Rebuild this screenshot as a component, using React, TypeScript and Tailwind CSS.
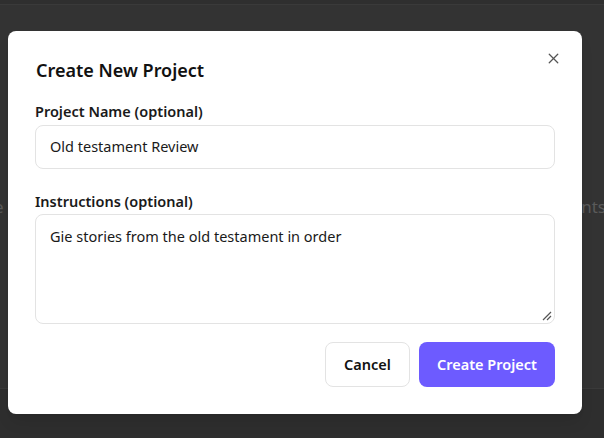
import { X } from "lucide-react";

export default function App() {
  return (
    <div
      className="relative h-[438px] w-[604px] overflow-hidden bg-[#333333]"
      style={{ fontFamily: '"Noto Sans", "Open Sans", sans-serif' }}
    >
      {/* dimmed page behind the overlay */}
      <div className="h-[5px] border-b border-[#3a3a3a] bg-[#2f2f2f]" />
      <div className="flex h-[383px] items-center justify-between pt-[20px] text-[17px] text-[#5a5a5a]">
        <span className="-ml-[6px]">e</span>
        <span className="-mr-[2px]">nts</span>
      </div>
      <div className="h-[50px] border-t border-[#3a3a3a] bg-[#2e2e2e]" />

      <div className="absolute left-[8px] top-[31px] w-[574px] rounded-lg bg-white px-[27px] pb-[27px] pt-[26px] shadow-lg">
        <button className="absolute right-[20px] top-[19px] text-[#555]">
          <X className="h-[17px] w-[17px]" strokeWidth={1.8} />
        </button>
        <h2 className="ml-px text-[18px] font-semibold leading-[26px] text-[#111]">Create New Project</h2>

        <label className="mt-[18px] block text-[14.5px] font-semibold leading-[20px] text-[#1a1a1a]">
          Project Name (optional)
        </label>
        <div className="mt-[4px] flex h-[44px] items-center rounded-lg border border-[#e3e3e3] px-[14px] text-[14.5px] text-[#1a1a1a]">
          Old testament Review
        </div>

        <label className="mt-[22px] block text-[14.5px] font-semibold leading-[20px] text-[#1a1a1a]">
          Instructions (optional)
        </label>
        <div className="relative mt-[3px] h-[110px] rounded-lg border border-[#e3e3e3] px-[14px] pt-[10px] text-[14.5px] leading-[22px] text-[#1a1a1a]">
          Gie stories from the old testament in order
          <svg className="absolute bottom-[2px] right-[2px]" width="10" height="10" viewBox="0 0 10 10">
            <path d="M9 1L1 9M9 5L5 9" stroke="#555" strokeWidth="1.2" />
          </svg>
        </div>

        <div className="mt-[18px] flex justify-end gap-[9px]">
          <button className="h-[45px] w-[85px] rounded-lg border border-[#e3e3e3] bg-white text-[14.5px] font-semibold text-[#111]">
            Cancel
          </button>
          <button className="h-[45px] w-[136px] rounded-lg bg-[#6d5bff] text-[14.5px] font-semibold text-white">
            Create Project
          </button>
        </div>
      </div>
    </div>
  );
}
